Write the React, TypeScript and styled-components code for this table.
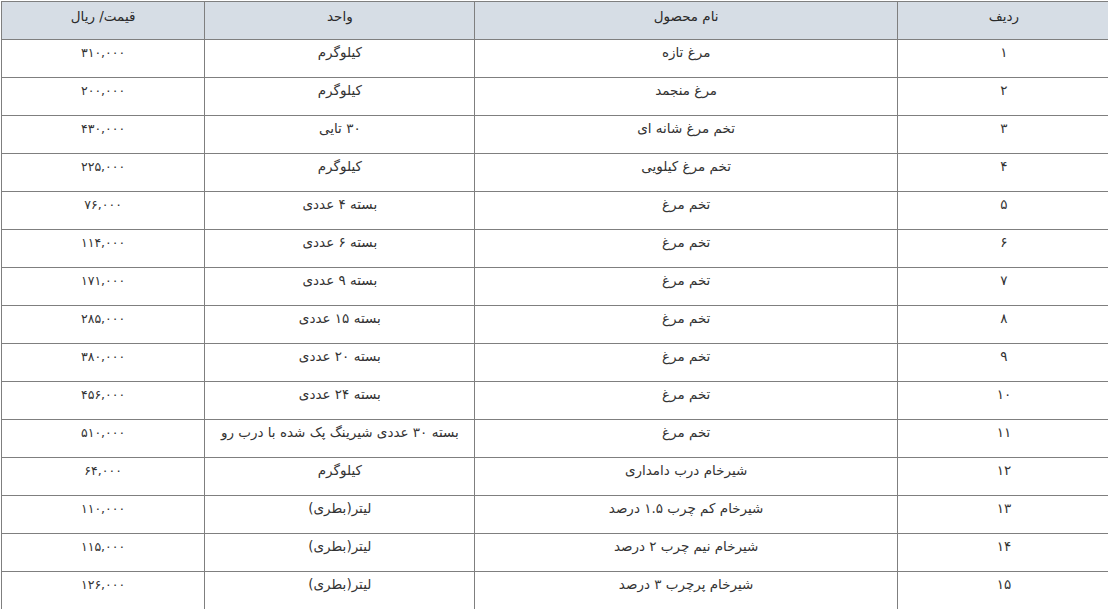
import React from "react";
import styled, { createGlobalStyle } from "styled-components";

const Global = createGlobalStyle`
  html, body { margin: 0; padding: 0; background: #fff; overflow: hidden; }
  body { font-family: "DejaVu Sans", sans-serif; }
`;

const Page = styled.div`
  padding: 1px 0 0 1px;
  width: 1112px;
`;

const Table = styled.table`
  direction: rtl;
  border-collapse: collapse;
  table-layout: fixed;
  width: 1110px;
  font-family: "DejaVu Sans", sans-serif;
  font-size: 13.5px;
  color: #333;
`;

const HeadCell = styled.th`
  background: #d6dde5;
  border: 1px solid #7f7f7f;
  height: 33px;
  padding: 4px 6px 0;
  font-weight: normal;
  text-align: center;
  vertical-align: top;
  line-height: 20px;
  color: #2a2a2a;
`;

const Cell = styled.td`
  border: 1px solid #7f7f7f;
  height: 35px;
  padding: 2px 6px 0;
  text-align: center;
  vertical-align: top;
  line-height: 20px;
  white-space: nowrap;
`;

const Num = styled.span<{ $small?: boolean }>`
  font-size: ${(p) => (p.$small ? "12.5px" : "13.5px")};
`;

const rows: [string, string, string, string][] = [
  ["۱", "مرغ تازه", "کیلوگرم", "۳۱۰,۰۰۰"],
  ["۲", "مرغ منجمد", "کیلوگرم", "۲۰۰,۰۰۰"],
  ["۳", "تخم مرغ شانه ای", "۳۰ تایی", "۴۳۰,۰۰۰"],
  ["۴", "تخم مرغ کیلویی", "کیلوگرم", "۲۲۵,۰۰۰"],
  ["۵", "تخم مرغ", "بسته ۴ عددی", "۷۶,۰۰۰"],
  ["۶", "تخم مرغ", "بسته ۶ عددی", "۱۱۴,۰۰۰"],
  ["۷", "تخم مرغ", "بسته ۹ عددی", "۱۷۱,۰۰۰"],
  ["۸", "تخم مرغ", "بسته ۱۵ عددی", "۲۸۵,۰۰۰"],
  ["۹", "تخم مرغ", "بسته ۲۰ عددی", "۳۸۰,۰۰۰"],
  ["۱۰", "تخم مرغ", "بسته ۲۴ عددی", "۴۵۶,۰۰۰"],
  ["۱۱", "تخم مرغ", "بسته ۳۰ عددی شیرینگ پک شده با درب رو", "۵۱۰,۰۰۰"],
  ["۱۲", "شیرخام درب دامداری", "کیلوگرم", "۶۴,۰۰۰"],
  ["۱۳", "شیرخام کم چرب ۱.۵ درصد", "لیتر(بطری)", "۱۱۰,۰۰۰"],
  ["۱۴", "شیرخام نیم چرب ۲ درصد", "لیتر(بطری)", "۱۱۵,۰۰۰"],
  ["۱۵", "شیرخام پرچرب ۳ درصد", "لیتر(بطری)", "۱۲۶,۰۰۰"],
];

export default function App() {
  return (
    <Page>
      <Global />
      <Table>
        <colgroup>
          <col style={{ width: 213 }} />
          <col style={{ width: 422 }} />
          <col style={{ width: 270 }} />
          <col style={{ width: 203 }} />
        </colgroup>
        <thead>
          <tr>
            <HeadCell>ردیف</HeadCell>
            <HeadCell>نام محصول</HeadCell>
            <HeadCell>واحد</HeadCell>
            <HeadCell>قیمت/ ریال</HeadCell>
          </tr>
        </thead>
        <tbody>
          {rows.map((r) => (
            <tr key={r[0]}>
              <Cell>{r[0]}</Cell>
              <Cell>{r[1]}</Cell>
              <Cell>{r[2]}</Cell>
              <Cell>
                <Num $small>{r[3]}</Num>
              </Cell>
            </tr>
          ))}
        </tbody>
      </Table>
    </Page>
  );
}
